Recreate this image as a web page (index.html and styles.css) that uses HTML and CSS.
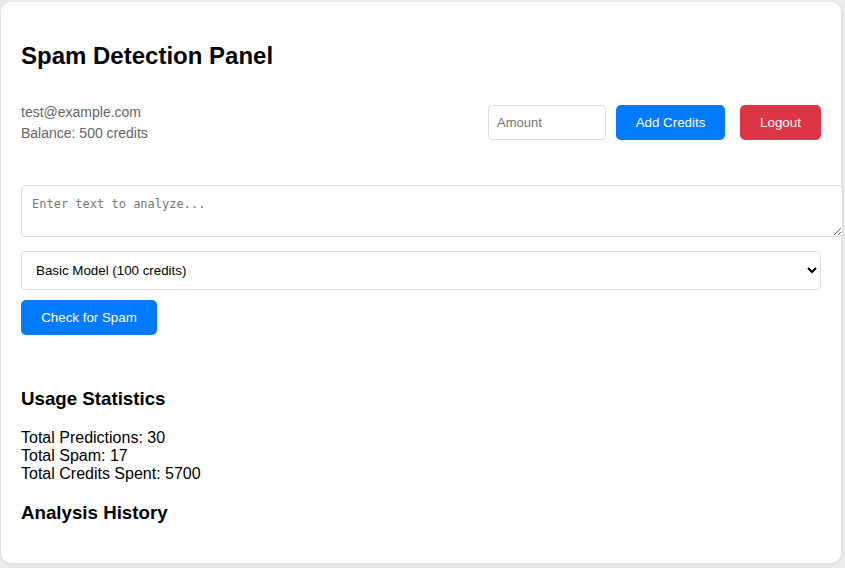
FILE: index.html
```html
<!DOCTYPE html>
<html>
<head>
<meta charset="utf-8">
<link rel="stylesheet" href="styles.css">
</head>
<body>
<div class="card">
  <h2 class="title">Spam Detection Panel</h2>
  <div class="user-row">
    <div class="user-info">
      <div>test@example.com</div>
      <div>Balance: 500 credits</div>
    </div>
    <div class="actions">
      <input class="amount" type="number" placeholder="Amount">
      <button class="btn btn-blue add">Add Credits</button>
      <button class="btn btn-red logout">Logout</button>
    </div>
  </div>
  <div class="form">
    <textarea class="text" placeholder="Enter text to analyze..."></textarea>
    <select class="model">
      <option>Basic Model (100 credits)</option>
    </select>
    <div><button class="btn btn-blue check">Check for Spam</button></div>
  </div>
  <h3 class="section">Usage Statistics</h3>
  <div class="stats">
    <div>Total Predictions: 30</div>
    <div>Total Spam: 17</div>
    <div>Total Credits Spent: 5700</div>
  </div>
  <h3 class="section">Analysis History</h3>
</div>
</body>
</html>
```

FILE: styles.css
```css
html, body {
  margin: 0;
  padding: 0;
}
body {
  background: #ececee;
  font-family: "Liberation Sans", Arial, sans-serif;
  padding-top: 2px;
  height: 568px;
  box-sizing: border-box;
  overflow: hidden;
}
.card {
  width: 800px;
  margin-left: 1px;
  padding: 20px;
  background: #fff;
  border-radius: 10px;
  box-shadow: 0 1px 4px rgba(0,0,0,0.1);
}
.title {
  font-size: 24px;
  font-weight: bold;
  margin: 20px 0 31px;
  color: #000;
}
.user-row {
  display: flex;
  justify-content: space-between;
  align-items: center;
}
.user-info {
  color: #666;
  font-size: 14px;
  line-height: 21px;
  padding-top: 1px;
}
.actions {
  display: flex;
  align-items: center;
}
.amount {
  width: 118px;
  height: 35px;
  box-sizing: border-box;
  padding: 8px;
  border: 1px solid #ddd;
  border-radius: 4px;
  font-family: "Liberation Sans", Arial, sans-serif;
  font-size: 13px;
  margin-right: 10px;
  -moz-appearance: textfield;
}
.amount::-webkit-outer-spin-button,
.amount::-webkit-inner-spin-button {
  -webkit-appearance: none;
  margin: 0;
}
.amount::placeholder { color: #757575; }
.btn {
  height: 35px;
  padding: 0;
  border: none;
  border-radius: 5px;
  color: #fff;
  font-family: "Liberation Sans", Arial, sans-serif;
  font-size: 13.33px;
  cursor: pointer;
  text-align: center;
}
.btn-blue { background: #007bff; }
.btn-red { background: #dc3545; }
.add { width: 109px; margin-right: 15px; }
.logout { width: 81px; }
.check { width: 136px; }
.form {
  margin-top: 41px;
}
.text {
  display: block;
  width: 800px;
  height: 30px;
  padding: 11px 10px 9px;
  border: 1px solid #ddd;
  border-radius: 4px;
  font-family: "DejaVu Sans Mono", monospace;
  font-size: 12px;
  margin: 0 0 14px;
}
.text::placeholder { color: #777; }
.model {
  display: block;
  width: 800px;
  height: 39px;
  padding: 0 10px;
  border: 1px solid #ddd;
  border-radius: 4px;
  background: #fff;
  font-family: "Liberation Sans", Arial, sans-serif;
  font-size: 13.33px;
  color: #000;
  margin: 0 0 10px;
}
.section {
  font-size: 18.72px;
  font-weight: bold;
  margin: 53px 0 19px;
}
.stats {
  font-size: 16px;
  line-height: 18px;
}
.stats + .section {
  margin-top: 19px;
  margin-bottom: 19px;
}
```
